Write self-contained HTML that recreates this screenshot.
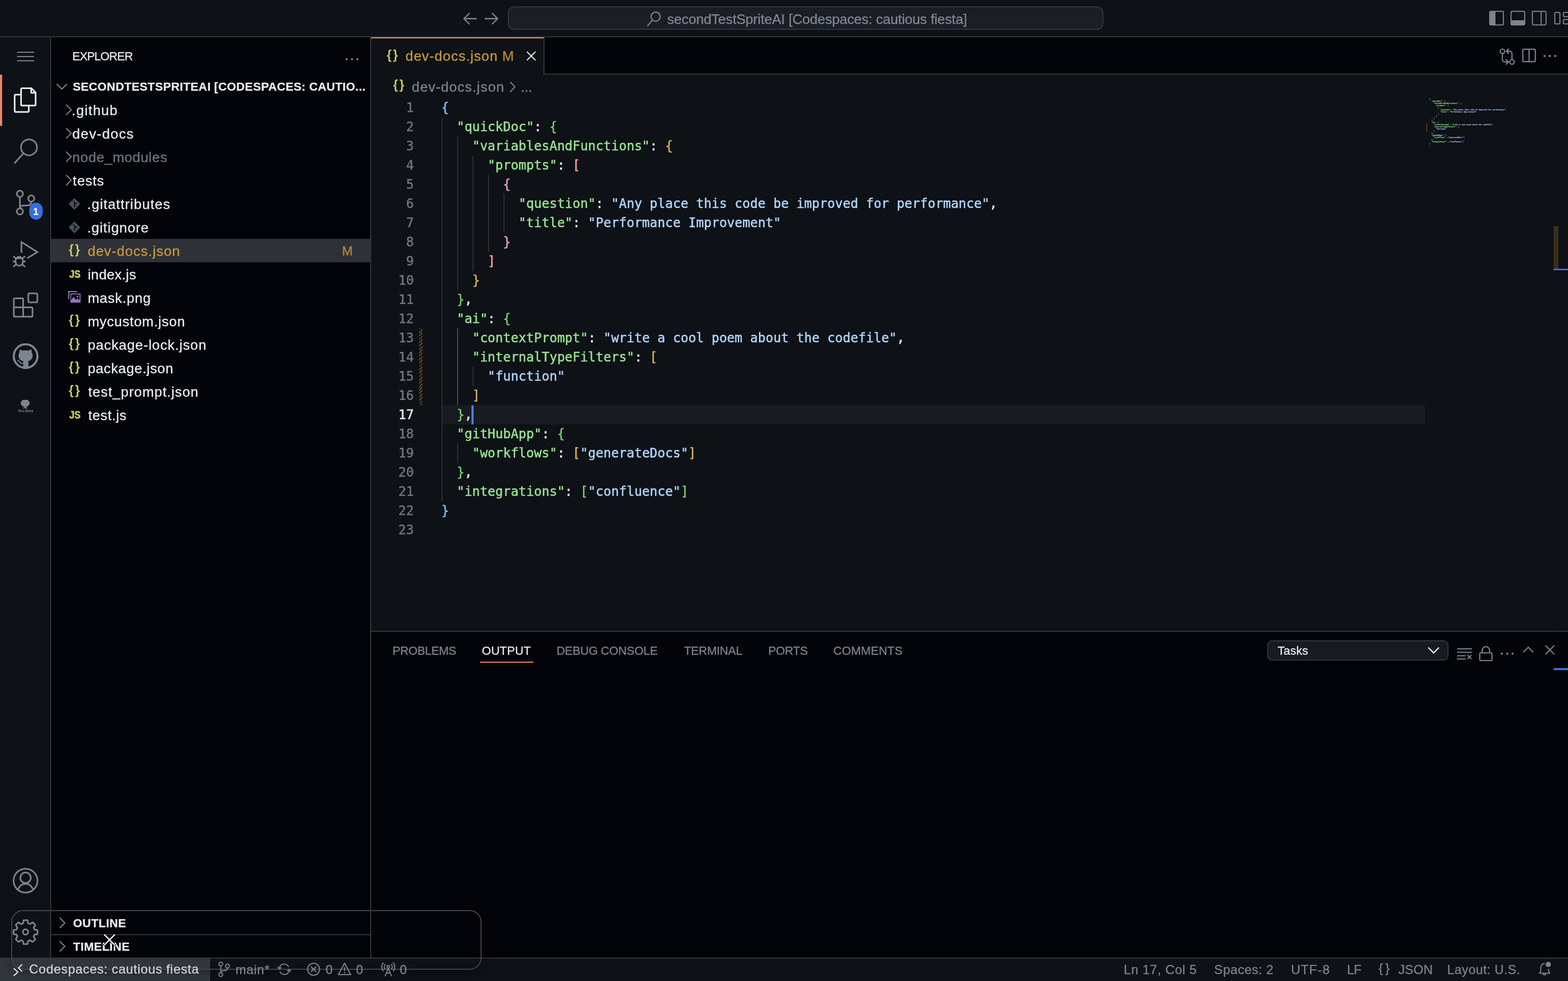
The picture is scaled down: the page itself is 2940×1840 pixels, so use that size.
<!DOCTYPE html>
<html lang="en"><head>
<meta charset="utf-8">
<title>dev-docs.json - secondTestSpriteAI [Codespaces: cautious fiesta]</title>
<style>
*{box-sizing:border-box;margin:0;padding:0}
html,body{width:2940px;height:1840px;overflow:hidden;background:#0e1116}
body{position:relative;will-change:transform;font-family:"Liberation Sans",sans-serif;font-size:26px;color:#e7edf2;-webkit-font-smoothing:antialiased}
.abs{position:absolute}
.t{position:absolute;white-space:pre;line-height:1.2;left:0;top:0;-webkit-text-stroke:.3px}
.t.b{-webkit-text-stroke:.25px}
svg{position:absolute;overflow:visible}
.ic{fill:none;stroke:#7e858f;stroke-linecap:butt;stroke-linejoin:miter}
/* regions */
#titlebar{left:0;top:0;width:2940px;height:70px;background:#0e1116;border-bottom:2px solid #31363c}
#cmd{left:952px;top:12px;width:1117px;height:44px;border:2px solid #31363c;border-radius:12px;background:#1a1e25}
#activity{left:0;top:70px;width:96px;height:1726px;background:#0e1116;border-right:2px solid #31363c}
#sidebar{left:96px;top:70px;width:600px;height:1726px;background:#020409;border-right:2px solid #31363c}
#editor{left:696px;top:70px;width:2244px;height:1113px;background:#0e1116}
#tabs{left:0;top:0;width:2244px;height:70px;background:#020409;border-bottom:2px solid #31363c}
#tab{left:0;top:0;width:325px;height:70px;background:#0e1116;border-top:2px solid #e8876d;border-right:2px solid #31363c}
#panel{left:696px;top:1183px;width:2244px;height:613px;background:#020409;border-top:2px solid #31363c}
#status{left:0;top:1796px;width:2940px;height:44px;background:#0e1116;border-top:2px solid #31363c;color:#7e858f;font-size:24px}
#remote{left:0;top:0;width:394px;height:44px;background:#31363c}
.row{position:absolute;left:0;width:598px;height:44px}
.sel{background:#2e3238}
.mut{color:#7e858f}
.mod{color:#c99b3e}
.ign{color:#6f7680}
#status .t,#status svg{z-index:3}
.b{font-weight:bold}
.jb{font-weight:bold;-webkit-text-stroke:0 !important}
.jsi{-webkit-text-stroke:.5px #cbcb5a !important}
.s22{font-size:22px}
.s24{font-size:24px}
.s26{font-size:26px}
/* code */
#code{left:0;top:114px;width:2244px;height:999px;font-family:"DejaVu Sans Mono","Liberation Mono",monospace;font-size:24px;line-height:36px;-webkit-text-stroke:.5px}
.ln{position:absolute;left:0;width:80px;margin-top:0;text-align:right;color:#6f7680;white-space:pre;height:36px}
.cl{position:absolute;left:131.5px;margin-top:0;letter-spacing:.026px;white-space:pre;height:36px;color:#e7edf2}
.k{color:#98e491}.s{color:#afd5fb}
.b1{color:#89befa}.b2{color:#79d071}.b3{color:#dbb556}.b4{color:#f2a59b}.b5{color:#f1a0cc}
.g{position:absolute;width:2px;background:#2b3036}
.ga{background:#43474d}
#mini span[class^="b"]{color:#9aa1a9}
#mini .cl{color:#9aa1a9}
</style>
</head>
<body>
<div id="titlebar" class="abs">
<svg style="left:864px;top:18px" width="34" height="34" viewBox="0 0 34 34"><path class="ic" stroke-width="2.4" d="M16.5 6.5 L6 17 L16.5 27.5 M6 17 H30"></path></svg>
<svg style="left:904px;top:18px" width="34" height="34" viewBox="0 0 34 34"><path class="ic" stroke-width="2.4" d="M18.5 6.5 L29 17 L18.5 27.5 M29 17 H5"></path></svg>
<div id="cmd" class="abs"></div>
<svg style="left:1211px;top:20px" width="32" height="32" viewBox="0 0 32 32"><circle class="ic" stroke-width="2.2" cx="18.3" cy="11.2" r="8.6"></circle><path class="ic" stroke-width="2.2" d="M12.4 17.6 L2.8 29"></path></svg>
<span class="t s26" style="color:#7f8792;letter-spacing:-0.186px;left:1251.00px;top:21.20px;">secondTestSpriteAI [Codespaces: cautious fiesta]</span>
<svg style="left:2792px;top:20px" width="28" height="28" viewBox="0 0 28 28"><rect class="ic" stroke-width="2" x="1.2" y="1.2" width="25.6" height="25.6" rx="2.2"></rect><path fill="#7e858f" d="M1.2 3 a2 2 0 0 1 2-1.8 H12 V26.8 H3.2 a2 2 0 0 1 -2-2z"></path></svg>
<svg style="left:2832px;top:20px" width="28" height="28" viewBox="0 0 28 28"><rect class="ic" stroke-width="2" x="1.2" y="1.2" width="25.6" height="25.6" rx="2.2"></rect><path fill="#7e858f" d="M1.2 18 H26.8 V24.8 a2 2 0 0 1 -2 2 H3.2 a2 2 0 0 1 -2-2z"></path></svg>
<svg style="left:2872px;top:20px" width="28" height="28" viewBox="0 0 28 28"><rect class="ic" stroke-width="2" x="1.2" y="1.2" width="25.6" height="25.6" rx="2.2"></rect><path class="ic" stroke-width="2" d="M17.6 1.2 V26.8"></path></svg>
<svg style="left:2914px;top:22px" width="26" height="24" viewBox="0 0 26 24"><rect class="ic" stroke-width="2" x="1.2" y="1.2" width="9.6" height="21.6" rx="1.800"></rect><rect class="ic" stroke-width="2" x="17.4" y="1.2" width="9.6" height="8" rx="1.800"></rect><rect class="ic" stroke-width="2" x="17.4" y="14.8" width="9.6" height="8" rx="1.800"></rect></svg>
</div>
<div id="activity" class="abs">
<div class="abs" style="left:0;top:70px;width:4px;height:96px;background:#e8876d"></div>
<svg style="left:0;top:-70px" width="96" height="1840" viewBox="0 0 96 1840">
<g class="ic" stroke-width="2">
<path d="M32 98 H64 M32 106 H64 M32 114 H64"></path>
</g>
<g class="ic" stroke-width="3">
<!-- explorer (active) -->
<g style="stroke:#e7edf2" stroke-linejoin="round">
<path d="M43 165.5 H59 L66.8 173.5 V196 a2 2 0 0 1 -2 2 H41.5 a2 2 0 0 1 -2 -2 V167.5 a2 2 0 0 1 2 -2z"></path>
<path d="M58.5 165.5 V174 H66.8"></path>
<path d="M39.5 177.5 H29.5 a2 2 0 0 0 -2 2 V208 a2 2 0 0 0 2 2 H52 a2 2 0 0 0 2 -2 V198"></path>
</g>
<!-- search -->
<circle cx="54.4" cy="276.4" r="15"></circle>
<path d="M44 287.5 L27 306.5"></path>
<!-- scm -->
<circle cx="37.3" cy="363.6" r="5.8"></circle>
<circle cx="58.6" cy="372.4" r="5.8"></circle>
<circle cx="37.3" cy="396.6" r="5.8"></circle>
<path d="M37.3 369.4 V390.8 M58.6 378.2 c0 6 -4 7.3 -9 7.3 h-6 c-4 0 -6.3 1.5 -6.3 5.3"></path>
<!-- debug -->
<path d="M40.2 474 V454 L70 472.8 L51 484.5"></path>
<ellipse cx="36" cy="490" rx="7" ry="8.6"></ellipse>
<path d="M29.5 484.5 H42.5 M24 490.5 H29 M43 490.5 H48 M25 480.5 L30.5 485.5 M47 480.5 L41.5 485.5 M25 500.5 L30.5 495.5 M47 500.5 L41.5 495.5"></path>
<!-- extensions -->
<path d="M43.4 576.6 V561.5 a2 2 0 0 0 -2 -2 H27.9 a2 2 0 0 0 -2 2 V592 a2 2 0 0 0 2 2 H59 a2 2 0 0 0 2 -2 V578.6 a2 2 0 0 0 -2 -2 H25.9 M43.4 576.6 V594"></path>
<rect x="53" y="550.3" width="17" height="16.6" rx="2.5"></rect>
<!-- github -->
<circle cx="48" cy="668" r="22.2" stroke-width="4"></circle>
<!-- account -->
<circle cx="47.9" cy="1651.8" r="22.4"></circle>
<circle cx="47.9" cy="1646.4" r="9.8"></circle>
<path d="M34.2 1667.500 c2.600 -6.400 7.400 -9.800 13.7 -9.800 s11.100 3.400 13.700 9.800"></path>
<!-- settings -->
<circle cx="47.9" cy="1748" r="5"></circle>
<path stroke-linejoin="round" d="M44.3 1726 h7.2 l1.2 5.6 l3.6 1.6 l4.9 -3.2 l5.1 5.1 l-3.2 4.9 l1.6 3.6 l5.6 1.2 v7.2 l-5.6 1.2 l-1.6 3.6 l3.2 4.9 l-5.1 5.1 l-4.9 -3.2 l-3.6 1.6 l-1.2 5.6 h-7.2 l-1.2 -5.6 l-3.6 -1.6 l-4.9 3.2 l-5.1 -5.1 l3.2 -4.9 l-1.6 -3.6 l-5.6 -1.2 v-7.2 l5.6 -1.2 l1.6 -3.6 l-3.2 -4.9 l5.1 -5.1 l4.9 3.2 l3.6 -1.6z"></path>
</g>
<!-- github cat -->
<g transform="translate(48,668)"><path fill="#7e858f" d="M-4.600 21 L-4.600 9.500 C-9 8.500 -13.3 5 -13.3 -1 C-13.3 -3.500 -12.5 -5.600 -11.200 -7.200 C-11.800 -9 -11.600 -10.8 -10.9 -12.2 C-9.200 -12.2 -7.400 -11.400 -5.700 -10.2 C-3.900 -10.7 -2 -11 0 -11 C2 -11 3.900 -10.7 5.700 -10.2 C7.400 -11.400 9.200 -12.2 10.9 -12.2 C11.600 -10.8 11.800 -9 11.200 -7.200 C12.5 -5.600 13.3 -3.500 13.3 -1 C13.3 5 9 8.500 4.600 9.500 C5.200 10.5 5.400 11.600 5.400 13 L5.400 21 Z"></path><path fill="none" stroke="#7e858f" stroke-width="2" stroke-linecap="round" d="M-4.600 13.4 C-8 14.2 -10 13 -11.200 10.8 C-12.2 9 -13 8.200 -14.6 7.600"></path></g>
<!-- dev-docs -->
<path fill="#7e858f" d="M43 750 h8.400 a2 2 0 0 1 2 2 v1.200 h.8 a1.200 1.200 0 0 1 1.200 1.200 v3.800 a1.200 1.200 0 0 1 -1.200 1.200 h-.8 v1 a2 2 0 0 1 -2 2 h-2.600 v2 h2.800 v1.500 h-8.800 v-1.500 h2.800 v-2 h-2.600 a2 2 0 0 1 -2 -2 v-1 h-.8 a1.200 1.200 0 0 1 -1.200 -1.200 v-3.800 a1.200 1.200 0 0 1 1.200 -1.200 h.8 v-1.200 a2 2 0 0 1 2 -2z"></path>
<text x="48.3" y="772.8" text-anchor="middle" fill="#7e858f" font-family="Liberation Sans, sans-serif" font-weight="bold" font-size="7.4" textLength="28.4" lengthAdjust="spacingAndGlyphs">Dev-Docs</text>
</svg>
<div class="abs" style="left:55px;top:310px;width:25px;height:32px;border-radius:12.5px;background:#386de3"></div>
<span class="t b" style="font-size:18px;color:#fff;left:62.20px;top:316.60px;">1</span>
</div>
<div id="sidebar" class="abs">
<span class="t s22" style="color:#e7edf2;letter-spacing:-0.876px;left:39.60px;top:22.70px;">EXPLORER</span>
<svg style="left:548px;top:36px" width="32" height="10" viewBox="0 0 32 10"><g fill="#7e858f"><circle cx="6" cy="5" r="2"></circle><circle cx="16" cy="5" r="2"></circle><circle cx="26" cy="5" r="2"></circle></g></svg>
<svg style="left:8px;top:84px" width="24" height="16" viewBox="0 0 24 16"><path class="ic" stroke-width="2" d="M2.5 3.5 L12 13 L21.5 3.5"></path></svg>
<span class="t s22 b" style="color:#e7edf2;letter-spacing:0.379px;left:40.50px;top:80.00px;">SECONDTESTSPRITEAI [CODESPACES: CAUTIO...</span>
<div class="row" style="top:114px">
<svg style="left:25px;top:11px" width="16" height="22" viewBox="0 0 16 22"><path class="ic" stroke-width="2" d="M3 1.5 L12.5 11 L3 20.5"></path></svg>
<span class="t s26 " style="letter-spacing:1.216px;left:38.60px;top:8.20px;">.github</span>
</div>
<div class="row" style="top:158px">
<svg style="left:25px;top:11px" width="16" height="22" viewBox="0 0 16 22"><path class="ic" stroke-width="2" d="M3 1.5 L12.5 11 L3 20.5"></path></svg>
<span class="t s26 " style="letter-spacing:1.315px;left:39.60px;top:8.20px;">dev-docs</span>
</div>
<div class="row" style="top:202px">
<svg style="left:25px;top:11px" width="16" height="22" viewBox="0 0 16 22"><path class="ic" stroke-width="2" d="M3 1.5 L12.5 11 L3 20.5"></path></svg>
<span class="t s26 ign" style="letter-spacing:0.657px;left:39.60px;top:8.20px;">node_modules</span>
</div>
<div class="row" style="top:246px">
<svg style="left:25px;top:11px" width="16" height="22" viewBox="0 0 16 22"><path class="ic" stroke-width="2" d="M3 1.5 L12.5 11 L3 20.5"></path></svg>
<span class="t s26 " style="letter-spacing:0.823px;left:40.60px;top:8.20px;">tests</span>
</div>
<div class="row" style="top:290px">
<svg style="left:32px;top:11px" width="23" height="23" viewBox="0 0 23 23"><path fill="#45525a" d="M11.5 .6 L22.4 11.500 L11.5 22.4 L.6 11.500z"></path><g stroke="#020409" stroke-width="1.300" fill="none"><path d="M8.5 5.2 L14.5 11.2 M11.6 8.3 V15.500"></path></g><circle cx="11.6" cy="15.8" r="1.500" fill="#020409"></circle><circle cx="14.6" cy="11.3" r="1.500" fill="#020409"></circle></svg>
<span class="t s26 " style="letter-spacing:1.052px;left:67.40px;top:8.20px;">.gitattributes</span>
</div>
<div class="row" style="top:334px">
<svg style="left:32px;top:11px" width="23" height="23" viewBox="0 0 23 23"><path fill="#45525a" d="M11.5 .6 L22.4 11.500 L11.5 22.4 L.6 11.500z"></path><g stroke="#020409" stroke-width="1.300" fill="none"><path d="M8.5 5.2 L14.5 11.2 M11.6 8.3 V15.500"></path></g><circle cx="11.6" cy="15.8" r="1.500" fill="#020409"></circle><circle cx="14.6" cy="11.3" r="1.500" fill="#020409"></circle></svg>
<span class="t s26 " style="letter-spacing:0.911px;left:67.40px;top:8.20px;">.gitignore</span>
</div>
<div class="row sel" style="top:378px">
<span class="t jb" style="font-size:23px;color:#cbcb5a;letter-spacing:2.849px;left:33.00px;top:7.00px;">{}</span>
<span class="t s26 mod" style="letter-spacing:1.028px;left:68.40px;top:8.20px;">dev-docs.json</span>
<span class="t s24" style="color:#ab8236;-webkit-text-stroke:.6px;left:545.20px;top:9.00px;">M</span>
</div>
<div class="row" style="top:422px">
<span class="t jb jsi" style="font-size:21px;color:#cbcb5a;transform:scaleX(.82);transform-origin:0 0;left:33.60px;top:9.20px;">JS</span>
<span class="t s26 " style="letter-spacing:0.392px;left:68.40px;top:8.20px;">index.js</span>
</div>
<div class="row" style="top:466px">
<svg style="left:31px;top:9px" width="25" height="24" viewBox="0 0 25 24"><path fill="none" stroke="#9976bf" stroke-width="2" d="M18 2 H2 V16"></path><path fill="#9976bf" d="M5 5.500 H24 V22.5 H5z"></path><path fill="#020409" d="M6.8 7.300 H22.2 V18.5 l-4 -3.8 l-3 2.6 l-4.200 -5.600 l-5 6.800z"></path><circle cx="18.4" cy="11" r="1.800" fill="#9976bf"></circle></svg>
<span class="t s26 " style="letter-spacing:0.777px;left:68.40px;top:8.20px;">mask.png</span>
</div>
<div class="row" style="top:510px">
<span class="t jb" style="font-size:23px;color:#cbcb5a;letter-spacing:2.849px;left:33.00px;top:7.00px;">{}</span>
<span class="t s26 " style="letter-spacing:0.740px;left:68.40px;top:8.20px;">mycustom.json</span>
</div>
<div class="row" style="top:554px">
<span class="t jb" style="font-size:23px;color:#cbcb5a;letter-spacing:2.849px;left:33.00px;top:7.00px;">{}</span>
<span class="t s26 " style="letter-spacing:0.884px;left:68.40px;top:8.20px;">package-lock.json</span>
</div>
<div class="row" style="top:598px">
<span class="t jb" style="font-size:23px;color:#cbcb5a;letter-spacing:2.849px;left:33.00px;top:7.00px;">{}</span>
<span class="t s26 " style="letter-spacing:0.640px;left:68.40px;top:8.20px;">package.json</span>
</div>
<div class="row" style="top:642px">
<span class="t jb" style="font-size:23px;color:#cbcb5a;letter-spacing:2.849px;left:33.00px;top:7.00px;">{}</span>
<span class="t s26 " style="letter-spacing:0.944px;left:69.40px;top:8.20px;">test_prompt.json</span>
</div>
<div class="row" style="top:686px">
<span class="t jb jsi" style="font-size:21px;color:#cbcb5a;transform:scaleX(.82);transform-origin:0 0;left:33.60px;top:9.20px;">JS</span>
<span class="t s26 " style="letter-spacing:0.632px;left:69.40px;top:8.20px;">test.js</span>
</div>
<div class="abs" style="left:0;top:1637px;width:598px;height:2px;background:#31363c"></div>
<svg style="left:-96px;top:-70px" width="300" height="1840" viewBox="0 0 300 1840"><g fill="#000"><circle cx="103.8" cy="1742.2" r="6.500"></circle><circle cx="124.3" cy="1742.2" r="6.500"></circle><circle cx="103.8" cy="1762.7" r="6.500"></circle><circle cx="124.3" cy="1762.7" r="6.500"></circle><circle cx="103.8" cy="1783.9" r="6.500"></circle><circle cx="124.3" cy="1783.9" r="6.500"></circle></g></svg>
<div class="abs" style="left:0;top:1682px;width:598px;height:2px;background:#31363c"></div>
<svg style="left:13px;top:1650px" width="16" height="22" viewBox="0 0 16 22"><path class="ic" stroke-width="2" d="M3 1.500 L12.5 11 L3 20.5"></path></svg>
<span class="t s22 b" style="color:#e7edf2;letter-spacing:0.454px;left:41.00px;top:1649.00px;">OUTLINE</span>
<svg style="left:13px;top:1694px" width="16" height="22" viewBox="0 0 16 22"><path class="ic" stroke-width="2" d="M3 1.500 L12.5 11 L3 20.5"></path></svg>
<span class="t s22 b" style="color:#e7edf2;letter-spacing:0.459px;left:41.00px;top:1693.20px;">TIMELINE</span>
</div>
<div id="editor" class="abs">
<div id="tabs" class="abs"><div id="tab" class="abs"></div>
<span class="t jb" style="font-size:23px;color:#cbcb5a;letter-spacing:2.849px;left:29.20px;top:19.80px;">{}</span>
<span class="t s26 mod" style="letter-spacing:1.003px;left:64.20px;top:20.30px;">dev-docs.json</span>
<span class="t s26" style="color:#a98032;-webkit-text-stroke:.6px;left:245.80px;top:20.30px;">M</span>
<svg style="left:290px;top:25px" width="20" height="20" viewBox="0 0 20 20"><path class="ic" style="stroke:#e7edf2" stroke-width="2" d="M2 2 L18 18 M18 2 L2 18"></path></svg>
<svg style="left:2112px;top:19px" width="34" height="34" viewBox="0 0 34 34"><g class="ic" stroke-width="2.2"><circle cx="9" cy="7.200" r="4.200"></circle><circle cx="27" cy="27.2" r="4.200"></circle><path d="M9 11.400 V22.700 a4.500 4.500 0 0 0 4.500 4.500 H20 M15.600 22.400 L20.400 27.2 L15.600 32"></path><path d="M27 23 V11.700 a4.500 4.500 0 0 0 -4.500 -4.500 H16.600 M21.200 2.400 L16.400 7.200 L21.200 12"></path></g></svg>
<svg style="left:2158px;top:21px" width="26" height="26" viewBox="0 0 26 26"><g class="ic" stroke-width="2.2"><rect x="1.300" y="1.300" width="23.4" height="23.4" rx="2"></rect><path d="M13 1.300 V24.7"></path></g></svg>
<svg style="left:2196px;top:30px" width="28" height="10" viewBox="0 0 28 10"><g fill="#7e858f"><circle cx="4" cy="5" r="2.100"></circle><circle cx="14" cy="5" r="2.100"></circle><circle cx="24" cy="5" r="2.100"></circle></g></svg>
</div>
<span class="t jb" style="font-size:23px;color:#cbcb5a;letter-spacing:2.849px;left:41.20px;top:76.40px;">{}</span>
<span class="t s26 mut" style="letter-spacing:1.020px;left:76.20px;top:77.80px;">dev-docs.json</span>
<svg style="left:258px;top:82px" width="14" height="22" viewBox="0 0 14 22"><path class="ic" stroke-width="2" d="M2.5 1.500 L11.5 11 L2.5 20.5"></path></svg>
<span class="t s26 mut" style="letter-spacing:-0.224px;left:280.50px;top:77.80px;">...</span>
<div id="code" class="abs">
<div class="abs" style="left:133px;top:576px;width:1843px;height:36px;background:#181b21"></div>
<div class="g" style="left:132.0px;top:36px;height:720px"></div>
<div class="g" style="left:160.9px;top:72px;height:288px"></div>
<div class="g ga" style="left:160.9px;top:432px;height:144px"></div>
<div class="g" style="left:160.9px;top:648px;height:36px"></div>
<div class="g" style="left:189.8px;top:108px;height:216px"></div>
<div class="g" style="left:189.8px;top:504px;height:36px"></div>
<div class="g" style="left:218.7px;top:144px;height:144px"></div>
<div class="g" style="left:247.6px;top:180px;height:72px"></div>
<div class="abs" style="left:90px;top:432px;width:6px;height:144px;background:repeating-linear-gradient(135deg,#6d5121 0 2px,transparent 2px 4.500px)"></div>
<div class="ln" style="top:0px">1</div>
<div class="cl" style="top:0px"><span class="b1">{</span></div>
<div class="ln" style="top:36px">2</div>
<div class="cl" style="top:36px">  <span class="k">"quickDoc"</span>: <span class="b2">{</span></div>
<div class="ln" style="top:72px">3</div>
<div class="cl" style="top:72px">    <span class="k">"variablesAndFunctions"</span>: <span class="b3">{</span></div>
<div class="ln" style="top:108px">4</div>
<div class="cl" style="top:108px">      <span class="k">"prompts"</span>: <span class="b4">[</span></div>
<div class="ln" style="top:144px">5</div>
<div class="cl" style="top:144px">        <span class="b5">{</span></div>
<div class="ln" style="top:180px">6</div>
<div class="cl" style="top:180px">          <span class="k">"question"</span>: <span class="s">"Any place this code be improved for performance"</span>,</div>
<div class="ln" style="top:216px">7</div>
<div class="cl" style="top:216px">          <span class="k">"title"</span>: <span class="s">"Performance Improvement"</span></div>
<div class="ln" style="top:252px">8</div>
<div class="cl" style="top:252px">        <span class="b5">}</span></div>
<div class="ln" style="top:288px">9</div>
<div class="cl" style="top:288px">      <span class="b4">]</span></div>
<div class="ln" style="top:324px">10</div>
<div class="cl" style="top:324px">    <span class="b3">}</span></div>
<div class="ln" style="top:360px">11</div>
<div class="cl" style="top:360px">  <span class="b2">}</span>,</div>
<div class="ln" style="top:396px">12</div>
<div class="cl" style="top:396px">  <span class="k">"ai"</span>: <span class="b2">{</span></div>
<div class="ln" style="top:432px">13</div>
<div class="cl" style="top:432px">    <span class="k">"contextPrompt"</span>: <span class="s">"write a cool poem about the codefile"</span>,</div>
<div class="ln" style="top:468px">14</div>
<div class="cl" style="top:468px">    <span class="k">"internalTypeFilters"</span>: <span class="b3">[</span></div>
<div class="ln" style="top:504px">15</div>
<div class="cl" style="top:504px">      <span class="s">"function"</span></div>
<div class="ln" style="top:540px">16</div>
<div class="cl" style="top:540px">    <span class="b3">]</span></div>
<div class="ln" style="color:#e7edf2;top:576px">17</div>
<div class="cl" style="top:576px">  <span class="b2">}</span>,</div>
<div class="ln" style="top:612px">18</div>
<div class="cl" style="top:612px">  <span class="k">"gitHubApp"</span>: <span class="b2">{</span></div>
<div class="ln" style="top:648px">19</div>
<div class="cl" style="top:648px">    <span class="k">"workflows"</span>: <span class="b3">[</span><span class="s">"generateDocs"</span><span class="b3">]</span></div>
<div class="ln" style="top:684px">20</div>
<div class="cl" style="top:684px">  <span class="b2">}</span>,</div>
<div class="ln" style="top:720px">21</div>
<div class="cl" style="top:720px">  <span class="k">"integrations"</span>: <span class="b2">[</span><span class="s">"confluence"</span><span class="b2">]</span></div>
<div class="ln" style="top:756px">22</div>
<div class="cl" style="top:756px"><span class="b1">}</span></div>
<div class="ln" style="top:792px">23</div>
<div class="abs" style="left:187.6px;top:576px;width:4.400px;height:36px;background:#477fef"></div>
<div class="abs" id="mini" style="left:1984.3px;top:0;width:1700px;height:900px;transform-origin:0 0;transform:scale(.1389,.1111);font-weight:bold">
<div class="cl" style="left:0;top:0px"><span class="b1">{</span></div>
<div class="cl" style="left:0;top:36px">  <span class="k">"quickDoc"</span>: <span class="b2">{</span></div>
<div class="cl" style="left:0;top:72px">    <span class="k">"variablesAndFunctions"</span>: <span class="b3">{</span></div>
<div class="cl" style="left:0;top:108px">      <span class="k">"prompts"</span>: <span class="b4">[</span></div>
<div class="cl" style="left:0;top:144px">        <span class="b5">{</span></div>
<div class="cl" style="left:0;top:180px">          <span class="k">"question"</span>: <span class="s">"Any place this code be improved for performance"</span>,</div>
<div class="cl" style="left:0;top:216px">          <span class="k">"title"</span>: <span class="s">"Performance Improvement"</span></div>
<div class="cl" style="left:0;top:252px">        <span class="b5">}</span></div>
<div class="cl" style="left:0;top:288px">      <span class="b4">]</span></div>
<div class="cl" style="left:0;top:324px">    <span class="b3">}</span></div>
<div class="cl" style="left:0;top:360px">  <span class="b2">}</span>,</div>
<div class="cl" style="left:0;top:396px">  <span class="k">"ai"</span>: <span class="b2">{</span></div>
<div class="cl" style="left:0;top:432px">    <span class="k">"contextPrompt"</span>: <span class="s">"write a cool poem about the codefile"</span>,</div>
<div class="cl" style="left:0;top:468px">    <span class="k">"internalTypeFilters"</span>: <span class="b3">[</span></div>
<div class="cl" style="left:0;top:504px">      <span class="s">"function"</span></div>
<div class="cl" style="left:0;top:540px">    <span class="b3">]</span></div>
<div class="cl" style="left:0;top:576px">  <span class="b2">}</span>,</div>
<div class="cl" style="left:0;top:612px">  <span class="k">"gitHubApp"</span>: <span class="b2">{</span></div>
<div class="cl" style="left:0;top:648px">    <span class="k">"workflows"</span>: <span class="b3">[</span><span class="s">"generateDocs"</span><span class="b3">]</span></div>
<div class="cl" style="left:0;top:684px">  <span class="b2">}</span>,</div>
<div class="cl" style="left:0;top:720px">  <span class="k">"integrations"</span>: <span class="b2">[</span><span class="s">"confluence"</span><span class="b2">]</span></div>
<div class="cl" style="left:0;top:756px"><span class="b1">}</span></div>
</div>
<div class="abs" style="left:1978px;top:48px;width:2px;height:16px;background:#503c12"></div>
<div class="abs" style="left:2216px;top:0;width:28px;height:999px;border-left:1px solid #11151b"></div>
<div class="abs" style="left:2217px;top:240px;width:9px;height:80px;background:#3a2e1a"></div>
<div class="abs" style="left:2217px;top:319.5px;width:27px;height:3.5px;background:#3d6fd0"></div>
</div>
</div>
<div id="panel" class="abs">
<span class="t s22 mut" style="letter-spacing:-0.369px;left:40.00px;top:23.20px;">PROBLEMS</span>
<span class="t s22 " style="letter-spacing:0.240px;left:207.60px;top:23.20px;">OUTPUT</span>
<span class="t s22 mut" style="letter-spacing:-0.188px;left:347.40px;top:23.20px;">DEBUG CONSOLE</span>
<span class="t s22 mut" style="letter-spacing:-0.243px;left:586.40px;top:23.20px;">TERMINAL</span>
<span class="t s22 mut" style="letter-spacing:-0.304px;left:744.40px;top:23.20px;">PORTS</span>
<span class="t s22 mut" style="letter-spacing:0.178px;left:866.50px;top:23.20px;">COMMENTS</span>
<div class="abs" style="left:204px;top:56px;width:100px;height:2px;background:#e8876d"></div>
<div class="abs" style="left:1680px;top:16px;width:340px;height:38px;border:2px solid #31363c;border-radius:9px;background:#171b21"></div>
<span class="t s22" style="color:#e7edf2;letter-spacing:0.241px;left:1699.60px;top:23.20px;">Tasks</span>
<svg style="left:1980px;top:27px" width="24" height="16" viewBox="0 0 24 16"><path class="ic" style="stroke:#e7edf2" stroke-width="2.4" d="M2 2.500 L12 12.5 L22 2.500"></path></svg>
<svg style="left:2035px;top:29px" width="30" height="24" viewBox="0 0 30 24"><path class="ic" stroke-width="2" d="M1 3 H29 M1 9.500 H29 M1 16 H17 M1 22 H17 M20.5 14.5 L28 22 M28 14.5 L20.5 22"></path></svg>
<svg style="left:2077px;top:26px" width="26" height="30" viewBox="0 0 26 30"><g class="ic" stroke-width="2.2"><rect x="1.500" y="13.5" width="23" height="14.5" rx="2"></rect><path d="M6 13.5 V9 a7 7 0 0 1 14 0 V13.5"></path></g></svg>
<svg style="left:2116px;top:36px" width="28" height="10" viewBox="0 0 28 10"><g fill="#7e858f"><circle cx="4" cy="5" r="2"></circle><circle cx="14" cy="5" r="2"></circle><circle cx="24" cy="5" r="2"></circle></g></svg>
<svg style="left:2158px;top:27px" width="24" height="14" viewBox="0 0 24 14"><path class="ic" stroke-width="2" d="M2 11.500 L11.5 2 L21 11.500"></path></svg>
<svg style="left:2200px;top:24px" width="20" height="20" viewBox="0 0 20 20"><path class="ic" stroke-width="2" d="M1.500 1.500 L18.5 18.5 M18.5 1.500 L1.500 18.5"></path></svg>
<div class="abs" style="left:2217px;top:68px;width:27px;height:4px;background:#3d6fd0"></div>
</div>
<div id="status" class="abs"><div id="remote" class="abs"></div>
<svg style="left:22px;top:6px" width="24" height="30" viewBox="0 0 24 30"><path class="ic" style="stroke:#e7edf2" stroke-width="2" d="M3.500 12 L11.5 19.2 L3.500 26.4 M19.8 4.600 L12.6 11.500 L19.8 18.4"></path></svg>
<span class="t s24" style="color:#d0d4d9;letter-spacing:0.684px;left:54.60px;top:6.40px;">Codespaces: cautious fiesta</span>
<svg style="left:408px;top:4px" width="24" height="32" viewBox="0 0 24 32"><g class="ic" stroke-width="2"><circle cx="6" cy="6" r="3.600"></circle><circle cx="6" cy="26" r="3.600"></circle><circle cx="18.5" cy="10" r="3.600"></circle><path d="M6 9.600 V22.4 M18.5 13.6 c0 4 -3 5 -6 5 c-3.500 0 -6.500 1 -6.500 4"></path></g></svg>
<span class="t s24" style="letter-spacing:0.645px;left:441.40px;top:6.70px;">main*</span>
<svg style="left:519px;top:7px" width="28" height="26" viewBox="0 0 28 26"><g class="ic" stroke-width="2"><path d="M4.800 10.200 a9.200 9.200 0 0 1 17.400 -1.400 M23.2 15.800 a9.200 9.200 0 0 1 -17.400 1.400"></path><path d="M1.500 8.800 L4.800 12.400 L8.600 9.600 M26.500 17.200 L23.2 13.600 L19.400 16.400"></path></g></svg>
<svg style="left:575px;top:7px" width="26" height="26" viewBox="0 0 26 26"><g class="ic" stroke-width="2"><circle cx="13" cy="13" r="11.200"></circle><path d="M8 8 L18 18 M18 8 L8 18"></path></g></svg>
<span class="t s24" style="left:610.60px;top:6.70px;">0</span>
<svg style="left:633px;top:6px" width="26" height="26" viewBox="0 0 26 26"><g class="ic" stroke-width="2"><path stroke-linejoin="round" d="M13 2.500 L24.5 24 H1.500z"></path><path d="M13 10 V17 M13 19 V21.5"></path></g></svg>
<span class="t s24" style="left:667.40px;top:6.70px;">0</span>
<svg style="left:715px;top:5.5px" width="26" height="28" viewBox="0 0 26 28"><g class="ic" stroke-width="2"><circle cx="13" cy="9.500" r="2.400"></circle><path d="M13 12 L7 27 M13 12 L19 27 M9 21 H17 M7.500 4.500 a7 7 0 0 0 0 10 M18.5 4.500 a7 7 0 0 1 0 10 M4 1.500 a11.500 11.500 0 0 0 0 16 M22 1.500 a11.500 11.500 0 0 1 0 16"></path></g></svg>
<span class="t s24" style="left:749.40px;top:6.70px;">0</span>
<span class="t s24" style="letter-spacing:0.648px;left:2107.00px;top:6.70px;">Ln 17, Col 5</span>
<span class="t s24" style="letter-spacing:0.527px;left:2276.60px;top:6.70px;">Spaces: 2</span>
<span class="t s24" style="letter-spacing:1.089px;left:2420.70px;top:6.70px;">UTF-8</span>
<span class="t s24" style="letter-spacing:-0.748px;left:2525.70px;top:6.70px;">LF</span>
<span class="t s24" style="letter-spacing:0.108px;left:2622.00px;top:6.70px;">JSON</span>
<span class="t s24" style="letter-spacing:0.400px;left:2713.60px;top:6.70px;">Layout: U.S.</span>
<span class="t s24" style="letter-spacing:4.484px;left:2585.00px;top:4.00px;">{}</span>
<svg style="left:2884px;top:6px" width="28" height="28" viewBox="0 0 28 28"><g class="ic" stroke-width="2"><path stroke-linejoin="round" d="M12.5 3 a7.500 7.500 0 0 0 -7.500 7.500 V17 L2.500 21.500 H21.5 L19.5 17 V13"></path><path d="M9.500 22 a2.500 2.500 0 0 0 5 0"></path></g><circle cx="19" cy="5" r="5" fill="#7e858f"></circle></svg>
</div>
<div class="abs" style="left:21px;top:1707px;width:882px;height:112px;border:2px solid #454549;border-radius:22px;z-index:1;box-shadow:0 5px 16px rgba(0,0,0,.28)"></div>
<svg style="left:193px;top:1750px" width="26" height="26" viewBox="0 0 26 26"><path fill="none" stroke="#000" stroke-width="4.400" stroke-linecap="square" d="M3.200 3.600 L21.6 22 M21.6 3.600 L3.200 22"></path><path fill="none" stroke="#fff" stroke-width="2.400" stroke-linecap="butt" d="M2.200 2.600 L22.6 23 M22.6 2.600 L2.200 23"></path></svg>


</body></html>
